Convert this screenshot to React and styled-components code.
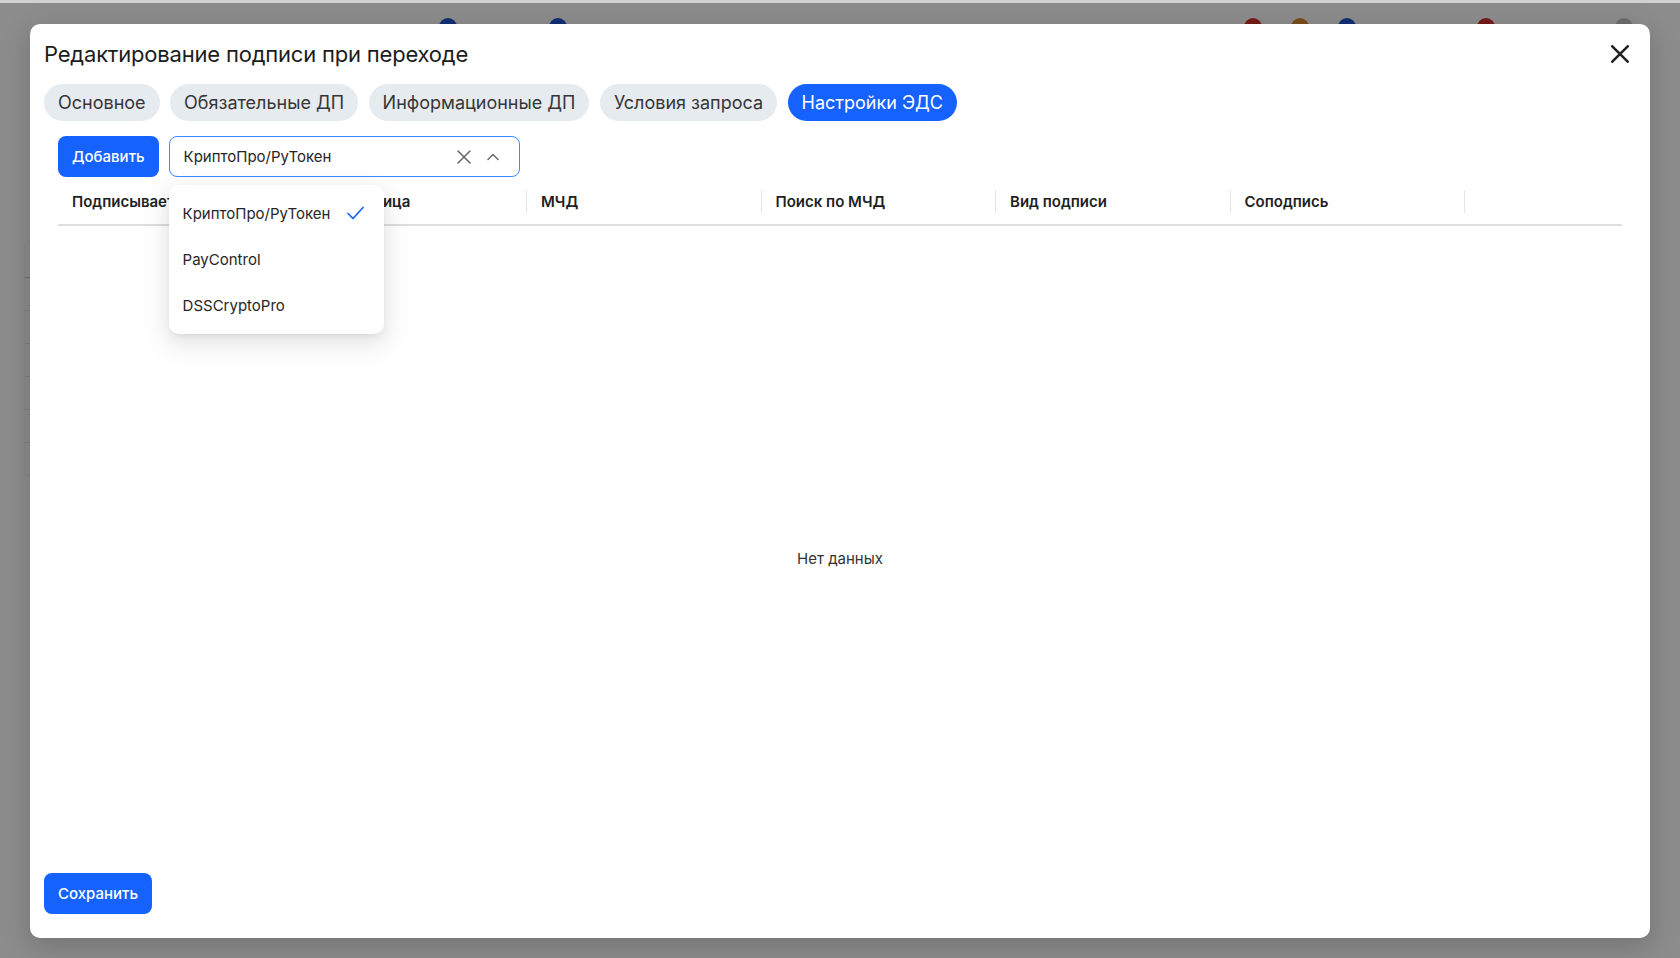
import React from 'react';
import styled, { createGlobalStyle } from 'styled-components';

const GlobalStyle = createGlobalStyle`
  * { box-sizing: border-box; }
  html, body { margin: 0; padding: 0; height: 100%; }
  body {
    font-family: Inter, "Noto Sans", "Liberation Sans", sans-serif;
    background: #ffffff;
    overflow: hidden;
    -webkit-font-smoothing: antialiased;
  }
  #root { height: 100%; }
`;

/* ---------- background page (dimmed under the overlay) ---------- */
const Page = styled.div`
  position: fixed;
  inset: 0;
  background: #ffffff;
  display: flex;
  flex-direction: column;
`;

const PageTop = styled.header`
  height: 60px;
  display: flex;
  align-items: flex-start;
  padding: 18px 0 0 439px;
`;

const Dot = styled.span`
  width: 18px;
  height: 18px;
  border-radius: 50%;
  flex: none;
  margin-left: ${(p) => p.$ml || 0}px;
  background: ${(p) => p.$color};
`;

const PageBody = styled.div`
  width: 60px;
  padding: 185px 0 0 24px;
  display: flex;
  flex-direction: column;
`;

const PageRow = styled.div`
  height: 33px;
  border-bottom: 1px solid ${(p) => (p.$first ? '#c4c4c4' : '#e8e8e8')};
  border-left: 1px solid #f4f4f4;
`;

const Overlay = styled.div`
  position: fixed;
  inset: 0;
  background: rgba(0, 0, 0, 0.45);
  box-shadow: inset 0 3px 0 rgba(255, 255, 255, 0.6);
`;

/* ---------- modal ---------- */
const Modal = styled.div`
  position: fixed;
  left: 30px;
  top: 24px;
  width: 1620px;
  height: 914px;
  background: #ffffff;
  border-radius: 10px;
  box-shadow: 0 8px 28px rgba(0, 0, 0, 0.18);
  display: flex;
  flex-direction: column;
`;

const ModalHeader = styled.div`
  display: flex;
  align-items: center;
  justify-content: space-between;
  padding: 16px 18px 0 14px;
`;

const Title = styled.h2`
  margin: 0;
  font-size: 22px;
  line-height: 28px;
  font-weight: 400;
  color: #1c1c1c;
  letter-spacing: -0.2px;
`;

const CloseButton = styled.button`
  width: 24px;
  height: 24px;
  padding: 0;
  border: 0;
  background: transparent;
  display: flex;
  align-items: center;
  justify-content: center;
  cursor: pointer;
`;

const Tabs = styled.div`
  display: flex;
  gap: 10.5px;
  margin: 16px 0 0 14px;
`;

const Tab = styled.button`
  height: 37px;
  padding: 0 14px;
  border: 0;
  border-radius: 19px;
  font-family: inherit;
  font-size: 18px;
  font-weight: 400;
  background: ${(p) => (p.$active ? '#1562fe' : '#e6ebf0')};
  color: ${(p) => (p.$active ? '#ffffff' : '#363636')};
  cursor: pointer;
`;

const Content = styled.div`
  flex: 1;
  display: flex;
  flex-direction: column;
  padding: 0 28px;
  margin-top: 15px;
  min-height: 0;
`;

const Toolbar = styled.div`
  display: flex;
  gap: 10px;
  position: relative;
  z-index: 2;
`;

const PrimaryButton = styled.button`
  height: 41px;
  padding: 0 14px;
  border: 0;
  border-radius: 8px;
  background: #1562fe;
  color: #ffffff;
  font-family: inherit;
  font-size: 15px;
  font-weight: 500;
  cursor: pointer;
`;

const SelectWrap = styled.div`
  position: relative;
  width: 351px;
`;

const SelectBox = styled.div`
  height: 41px;
  border: 1px solid #3f8bfd;
  border-radius: 8px;
  display: flex;
  align-items: center;
  padding: 0 20px 0 14px;
  background: #ffffff;
`;

const SelectValue = styled.span`
  flex: 1;
  font-size: 15px;
  color: #262626;
`;

const SelectIcons = styled.span`
  display: flex;
  align-items: center;
  gap: 16px;
`;

const Dropdown = styled.ul`
  position: absolute;
  top: calc(100% + 8px);
  left: 0;
  width: 215px;
  margin: 0;
  padding: 5px 0 6px;
  list-style: none;
  background: #ffffff;
  border-radius: 10px;
  box-shadow: 0 6px 16px rgba(0, 0, 0, 0.08), 0 3px 6px -4px rgba(0, 0, 0, 0.12),
    0 9px 28px 8px rgba(0, 0, 0, 0.05);
`;

const Option = styled.li`
  height: 46px;
  padding: 0 20px 0 14px;
  display: flex;
  align-items: center;
  justify-content: space-between;
  font-size: 15px;
  color: #262626;
`;

const Table = styled.div`
  flex: 1;
  display: flex;
  flex-direction: column;
`;

const HeaderRow = styled.div`
  display: grid;
  grid-template-columns: repeat(6, 1fr) 157px;
  height: 49px;
  border-bottom: 2px solid #dedede;
`;

const HeaderCell = styled.div`
  position: relative;
  display: flex;
  align-items: center;
  padding: 1px 14px 0;
  font-size: 15px;
  font-weight: 600;
  color: #1f1f1f;
  white-space: nowrap;
  overflow: hidden;

  &::after {
    content: '';
    display: ${(p) => (p.$last ? 'none' : 'block')};
    position: absolute;
    right: 0;
    top: 13px;
    height: 23px;
    width: 1px;
    background: #e6e6e6;
  }
`;

const Empty = styled.div`
  flex: 1;
  display: flex;
  align-items: center;
  justify-content: center;
  padding-top: 17px;
  font-size: 15px;
  color: #333333;
`;

const Footer = styled.div`
  padding: 0 14px 24px;
  display: flex;
`;

const XIcon = ({ size = 14, color = '#666', width = 1.5 }) => (
  <svg width={size} height={size} viewBox="0 0 14 14" fill="none">
    <path d="M1 1L13 13M13 1L1 13" stroke={color} strokeWidth={width} strokeLinecap="round" />
  </svg>
);

const ChevronUp = () => (
  <svg width="12" height="8" viewBox="0 0 12 8" fill="none">
    <path d="M1 6.5L6 1.5L11 6.5" stroke="#6b6b6b" strokeWidth="1.5" strokeLinecap="round" strokeLinejoin="round" />
  </svg>
);

const Check = () => (
  <svg width="17" height="14" viewBox="0 0 17 14" fill="none">
    <path d="M1 7.5L6 12.5L16 1.5" stroke="#1562fe" strokeWidth="1.7" strokeLinecap="round" strokeLinejoin="round" />
  </svg>
);

const tabs = ['Основное', 'Обязательные ДП', 'Информационные ДП', 'Условия запроса', 'Настройки ЭДС'];
const columns = ['Подписывает', 'Признак лица', 'МЧД', 'Поиск по МЧД', 'Вид подписи', 'Соподпись', ''];
const options = ['КриптоПро/РуТокен', 'PayControl', 'DSSCryptoPro'];

export default function App() {
  return (
    <>
      <GlobalStyle />
      <Page>
        <PageTop>
          <Dot $color="#1f56d6" />
          <Dot $color="#1f56d6" $ml={92} />
          <Dot $color="#d6322e" $ml={677} />
          <Dot $color="#db8a2e" $ml={29} />
          <Dot $color="#1f56d6" $ml={29} />
          <Dot $color="#d6322e" $ml={121} />
          <Dot $color="#c8c8c8" $ml={120} />
        </PageTop>
        <PageBody>
          {Array.from({ length: 7 }).map((_, i) => (
            <PageRow key={i} $first={i === 0} />
          ))}
        </PageBody>
      </Page>
      <Overlay />
      <Modal>
        <ModalHeader>
          <Title>Редактирование подписи при переходе</Title>
          <CloseButton aria-label="Закрыть">
            <XIcon size={18} color="#222" width={2} />
          </CloseButton>
        </ModalHeader>
        <Tabs>
          {tabs.map((t, i) => (
            <Tab key={t} $active={i === tabs.length - 1}>
              {t}
            </Tab>
          ))}
        </Tabs>
        <Content>
          <Toolbar>
            <PrimaryButton>Добавить</PrimaryButton>
            <SelectWrap>
              <SelectBox>
                <SelectValue>КриптоПро/РуТокен</SelectValue>
                <SelectIcons>
                  <XIcon />
                  <ChevronUp />
                </SelectIcons>
              </SelectBox>
              <Dropdown>
                {options.map((o, i) => (
                  <Option key={o}>
                    {o}
                    {i === 0 && <Check />}
                  </Option>
                ))}
              </Dropdown>
            </SelectWrap>
          </Toolbar>
          <Table>
            <HeaderRow>
              {columns.map((c, i) => (
                <HeaderCell key={i} $last={i === columns.length - 1}>
                  {c}
                </HeaderCell>
              ))}
            </HeaderRow>
            <Empty>Нет данных</Empty>
          </Table>
        </Content>
        <Footer>
          <PrimaryButton>Сохранить</PrimaryButton>
        </Footer>
      </Modal>
    </>
  );
}
